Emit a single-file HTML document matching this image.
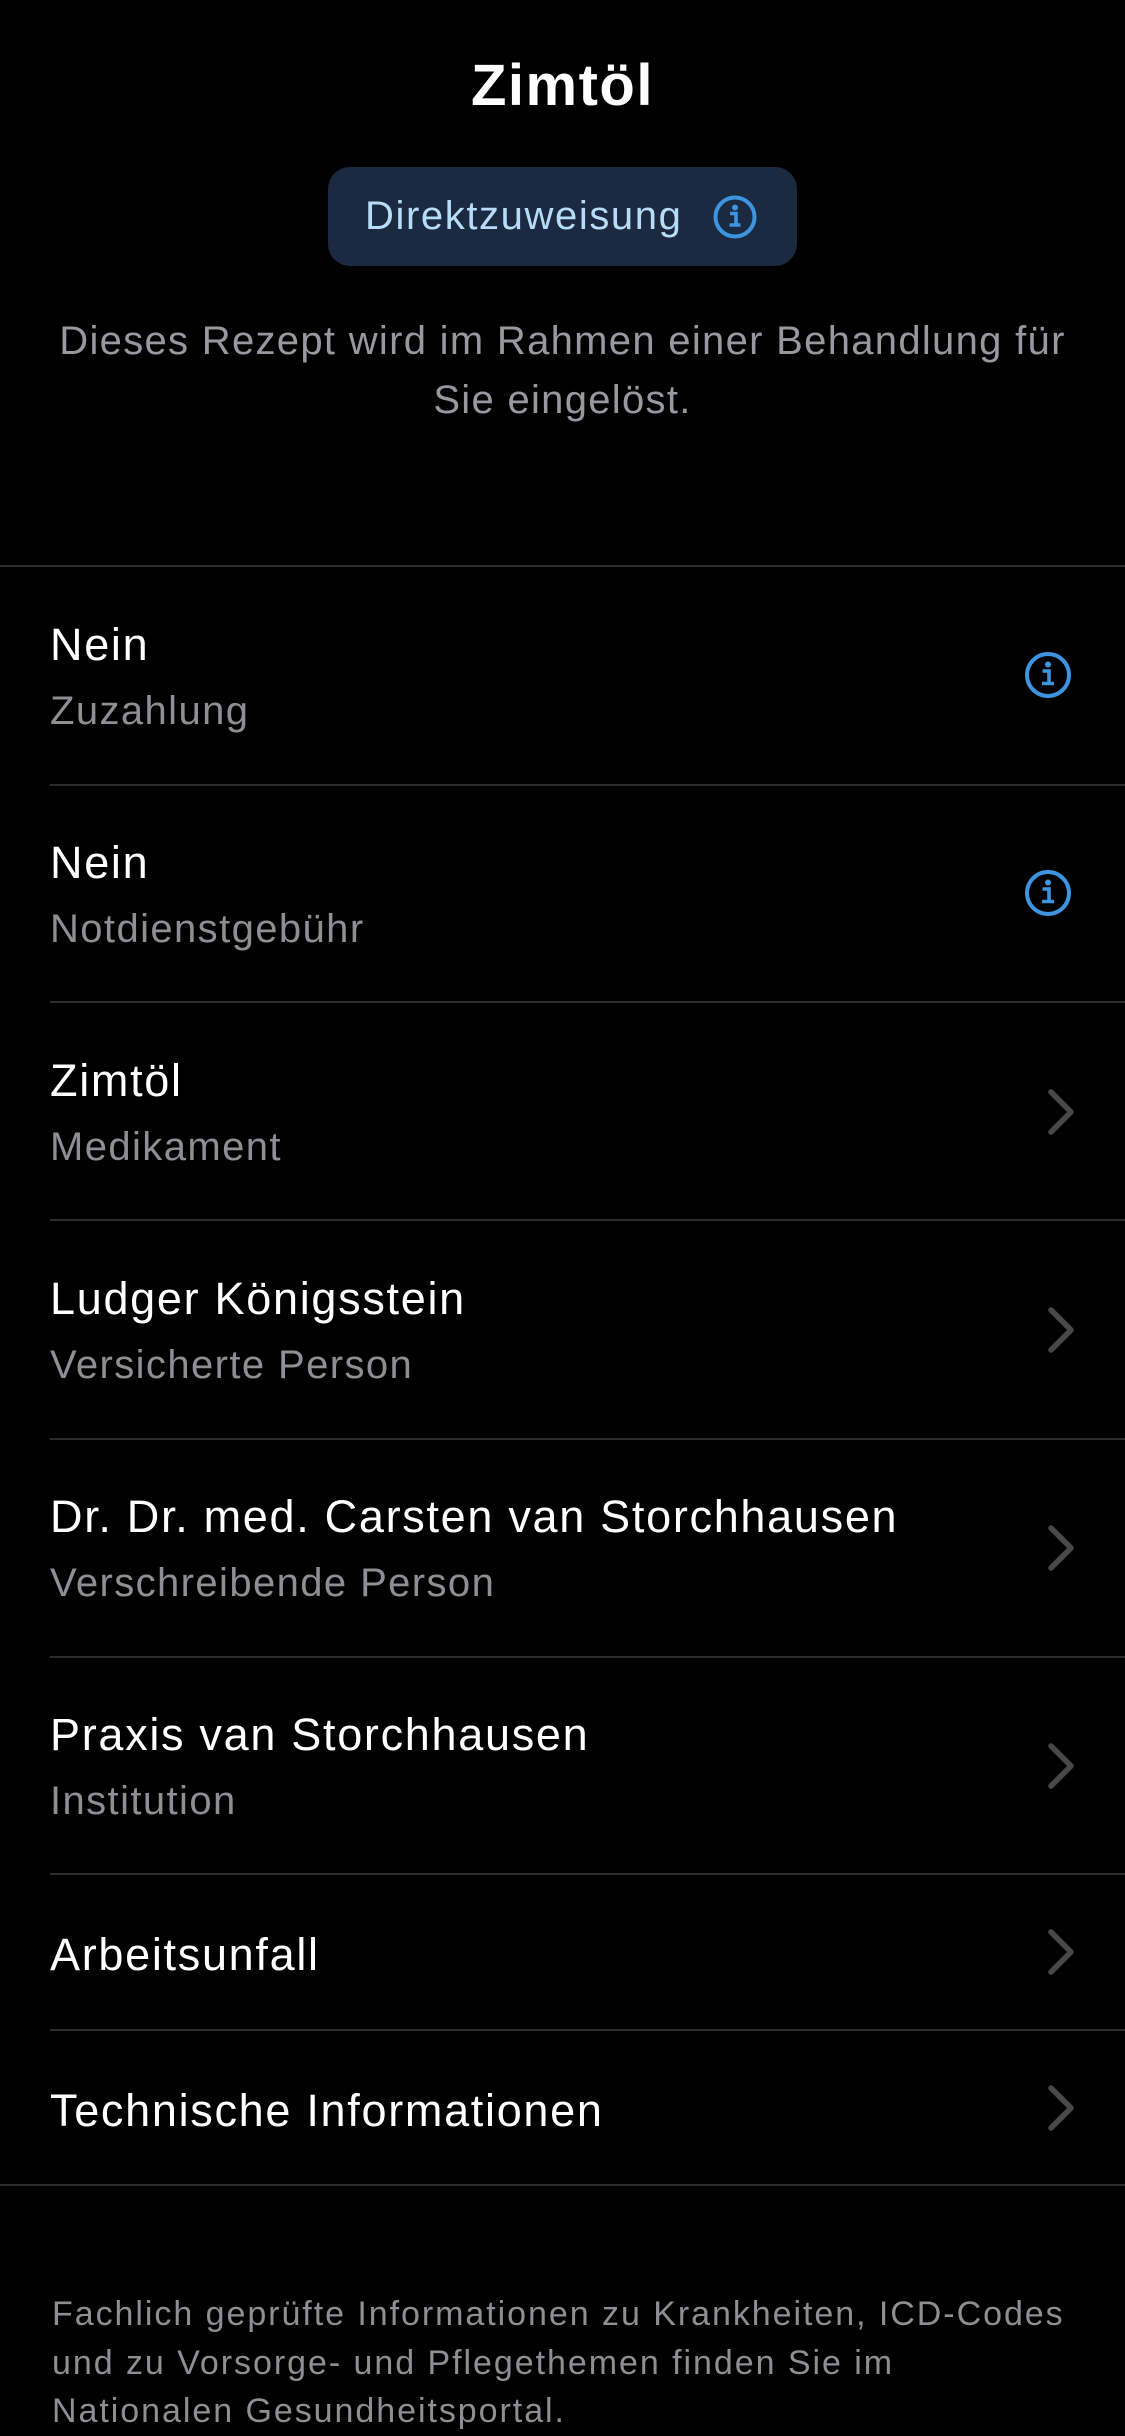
<!DOCTYPE html>
<html><head><meta charset="utf-8"><style>
*{margin:0;padding:0;box-sizing:border-box}
body{width:1125px;height:2436px;background:#000;font-family:"Liberation Sans",sans-serif;color:#fff;position:relative;overflow:hidden}
.abs{position:absolute}
.title{left:0;width:1125px;text-align:center;top:52px;font-size:58px;font-weight:bold;letter-spacing:1.5px}
.badge{left:328px;top:167px;width:469px;height:99px;border-radius:22px;background:#1b2a40}
.badge span{position:absolute;left:37px;top:27px;font-size:40px;color:#b7dcf7;letter-spacing:1.6px}
.desc{left:0;width:1125px;top:312px;text-align:center;font-size:40px;line-height:59px;color:#98989e;letter-spacing:1.3px}
.line{height:2px;background:#2c2c2e;right:0}
.t{left:50px;font-size:45px;letter-spacing:1.7px;margin-top:3px}
.s{left:50px;font-size:40px;color:#8e8e93;letter-spacing:1.4px;margin-top:3px}
.foot{left:52px;top:2290px;font-size:34px;line-height:48.5px;color:#8e8e93;width:1070px;letter-spacing:1.95px}
</style></head><body>
<div class="abs title">Zimtöl</div>
<div class="abs badge"><span>Direktzuweisung</span>
<svg class="abs" style="left:384px;top:27px" width="46" height="46" viewBox="0 0 46 46"><circle cx="23" cy="23" r="19.5" fill="none" stroke="#3d95e0" stroke-width="4"/><circle cx="23" cy="13.5" r="3" fill="#3d95e0"/><path d="M18 19.5h6v11M17.5 31h11" fill="none" stroke="#3d95e0" stroke-width="3.6"/></svg></div>
<div class="abs desc">Dieses Rezept wird im Rahmen einer Behandlung für<br>Sie eingelöst.</div>

<div class="abs line" style="left:0;top:565px"></div>
<div class="abs t" style="top:616px">Nein</div><div class="abs s" style="top:686px">Zuzahlung</div>
<div class="abs line" style="left:50px;top:784px"></div>
<div class="abs t" style="top:834px">Nein</div><div class="abs s" style="top:904px">Notdienstgebühr</div>
<div class="abs line" style="left:50px;top:1001px"></div>
<div class="abs t" style="top:1052px">Zimtöl</div><div class="abs s" style="top:1122px">Medikament</div>
<div class="abs line" style="left:50px;top:1219px"></div>
<div class="abs t" style="top:1270px">Ludger Königsstein</div><div class="abs s" style="top:1340px">Versicherte Person</div>
<div class="abs line" style="left:50px;top:1438px"></div>
<div class="abs t" style="top:1488px">Dr. Dr. med. Carsten van Storchhausen</div><div class="abs s" style="top:1558px">Verschreibende Person</div>
<div class="abs line" style="left:50px;top:1656px"></div>
<div class="abs t" style="top:1706px">Praxis van Storchhausen</div><div class="abs s" style="top:1776px">Institution</div>
<div class="abs line" style="left:50px;top:1873px"></div>
<div class="abs t" style="top:1926px">Arbeitsunfall</div>
<div class="abs line" style="left:50px;top:2029px"></div>
<div class="abs t" style="top:2082px">Technische Informationen</div>
<div class="abs line" style="left:0;top:2184px"></div>

<svg class="abs" style="left:1024px;top:651px" width="48" height="48" viewBox="0 0 48 48"><circle cx="24" cy="24" r="21" fill="none" stroke="#3d95e0" stroke-width="4"/><circle cx="24" cy="13.5" r="3" fill="#3d95e0"/><path d="M18.5 20h6.5v12M18 32.5h12" fill="none" stroke="#3d95e0" stroke-width="3.6"/></svg>
<svg class="abs" style="left:1024px;top:869px" width="48" height="48" viewBox="0 0 48 48"><circle cx="24" cy="24" r="21" fill="none" stroke="#3d95e0" stroke-width="4"/><circle cx="24" cy="13.5" r="3" fill="#3d95e0"/><path d="M18.5 20h6.5v12M18 32.5h12" fill="none" stroke="#3d95e0" stroke-width="3.6"/></svg>

<svg class="abs" style="left:1046px;top:1087px" width="30" height="50" viewBox="0 0 30 50"><path d="M5 5l20 20L5 45" fill="none" stroke="#48484a" stroke-width="5.5" stroke-linecap="round" stroke-linejoin="round"/></svg>
<svg class="abs" style="left:1046px;top:1305px" width="30" height="50" viewBox="0 0 30 50"><path d="M5 5l20 20L5 45" fill="none" stroke="#48484a" stroke-width="5.5" stroke-linecap="round" stroke-linejoin="round"/></svg>
<svg class="abs" style="left:1046px;top:1523px" width="30" height="50" viewBox="0 0 30 50"><path d="M5 5l20 20L5 45" fill="none" stroke="#48484a" stroke-width="5.5" stroke-linecap="round" stroke-linejoin="round"/></svg>
<svg class="abs" style="left:1046px;top:1741px" width="30" height="50" viewBox="0 0 30 50"><path d="M5 5l20 20L5 45" fill="none" stroke="#48484a" stroke-width="5.5" stroke-linecap="round" stroke-linejoin="round"/></svg>
<svg class="abs" style="left:1046px;top:1927px" width="30" height="50" viewBox="0 0 30 50"><path d="M5 5l20 20L5 45" fill="none" stroke="#48484a" stroke-width="5.5" stroke-linecap="round" stroke-linejoin="round"/></svg>
<svg class="abs" style="left:1046px;top:2083px" width="30" height="50" viewBox="0 0 30 50"><path d="M5 5l20 20L5 45" fill="none" stroke="#48484a" stroke-width="5.5" stroke-linecap="round" stroke-linejoin="round"/></svg>

<div class="abs foot">Fachlich geprüfte Informationen zu Krankheiten, ICD-Codes<br>und zu Vorsorge- und Pflegethemen finden Sie im<br>Nationalen Gesundheitsportal.</div>
</body></html>
